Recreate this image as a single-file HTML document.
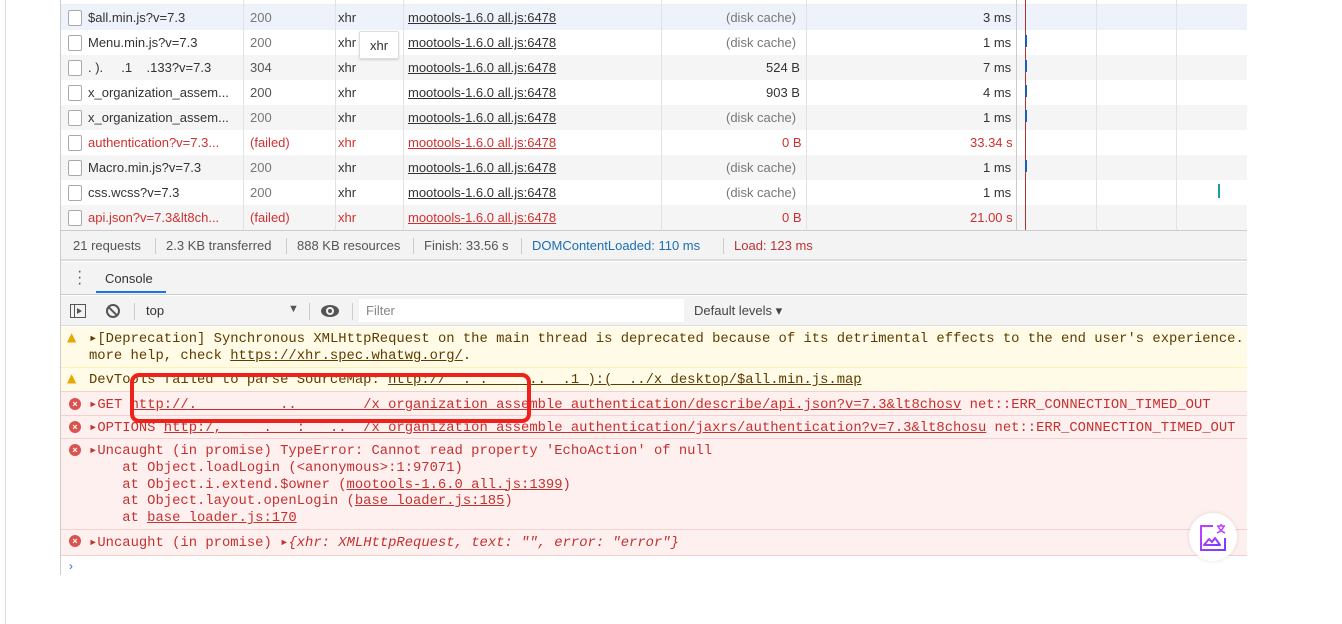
<!DOCTYPE html>
<html><head><meta charset="utf-8"><style>
*{margin:0;padding:0;box-sizing:border-box}
body{width:1342px;height:624px;background:#fff;position:relative;overflow:hidden;font-family:"Liberation Sans",sans-serif;font-size:13px;color:#333}
.abs{position:absolute}
.row{position:absolute;left:61px;width:1186px;height:25px;line-height:25px;white-space:nowrap}
.row span{position:absolute;top:0}
.cb{position:absolute;left:7px;top:5px;width:14px;height:16px;border:1px solid #aaa;border-radius:2px;background:#fff}
.red{color:#d0302f}
u{text-decoration:underline}
.vl{position:absolute;top:0;height:230px;width:1px;background:#e2e2e2}
.mono{font-family:"Liberation Mono",monospace;font-size:13.85px;white-space:pre}
.ic{position:absolute;left:8px;width:12px;height:12px;border-radius:50%;background:#d9534f;color:#fff;font-size:9px;line-height:12px;text-align:center;font-weight:bold;font-family:"Liberation Sans",sans-serif}
</style></head><body>
<div class="abs" style="left:5px;top:0;width:1px;height:624px;background:#ddd"></div>
<div class="abs" style="left:60px;top:0;width:1px;height:575px;background:#ccc"></div>
<div class="abs" style="left:61px;top:0;width:1186px;height:5px;background:#fff;border-bottom:1px solid #eee"></div>
<div class="row" style="top:5px;background:#eef3fb"><div class="cb"></div><span style="left:27px">$all.min.js?v=7.3</span><span style="left:189px;color:#777">200</span><span style="left:277px">xhr</span><span style="left:347px"><u>mootools-1.6.0 all.js:6478</u></span><span style="left:665px;color:#777">(disk cache)</span><span style="left:922px">3 ms</span></div>
<div class="row" style="top:30px;background:#fff"><div class="cb"></div><span style="left:27px">Menu.min.js?v=7.3</span><span style="left:189px;color:#777">200</span><span style="left:277px">xhr</span><span style="left:347px"><u>mootools-1.6.0 all.js:6478</u></span><span style="left:665px;color:#777">(disk cache)</span><span style="left:922px">1 ms</span></div>
<div class="row" style="top:55px;background:#f5f5f5"><div class="cb"></div><span style="left:27px">. ).&nbsp;&nbsp;&nbsp;&nbsp;&nbsp;.1&nbsp;&nbsp;&nbsp;&nbsp;.133?v=7.3</span><span style="left:189px;color:#555">304</span><span style="left:277px">xhr</span><span style="left:347px"><u>mootools-1.6.0 all.js:6478</u></span><span style="left:705px">524 B</span><span style="left:922px">7 ms</span></div>
<div class="row" style="top:80px;background:#fff"><div class="cb"></div><span style="left:27px">x_organization_assem...</span><span style="left:189px;color:#555">200</span><span style="left:277px">xhr</span><span style="left:347px"><u>mootools-1.6.0 all.js:6478</u></span><span style="left:705px">903 B</span><span style="left:922px">4 ms</span></div>
<div class="row" style="top:105px;background:#f5f5f5"><div class="cb"></div><span style="left:27px">x_organization_assem...</span><span style="left:189px;color:#777">200</span><span style="left:277px">xhr</span><span style="left:347px"><u>mootools-1.6.0 all.js:6478</u></span><span style="left:665px;color:#777">(disk cache)</span><span style="left:922px">1 ms</span></div>
<div class="row red" style="top:130px;background:#fff"><div class="cb"></div><span style="left:27px">authentication?v=7.3...</span><span style="left:189px">(failed)</span><span style="left:277px">xhr</span><span style="left:347px"><u>mootools-1.6.0 all.js:6478</u></span><span style="left:721px">0 B</span><span style="left:909px">33.34 s</span></div>
<div class="row" style="top:155px;background:#f5f5f5"><div class="cb"></div><span style="left:27px">Macro.min.js?v=7.3</span><span style="left:189px;color:#777">200</span><span style="left:277px">xhr</span><span style="left:347px"><u>mootools-1.6.0 all.js:6478</u></span><span style="left:665px;color:#777">(disk cache)</span><span style="left:922px">1 ms</span></div>
<div class="row" style="top:180px;background:#fff"><div class="cb"></div><span style="left:27px">css.wcss?v=7.3</span><span style="left:189px;color:#777">200</span><span style="left:277px">xhr</span><span style="left:347px"><u>mootools-1.6.0 all.js:6478</u></span><span style="left:665px;color:#777">(disk cache)</span><span style="left:922px">1 ms</span></div>
<div class="row red" style="top:205px;background:#f5f5f5"><div class="cb"></div><span style="left:27px">api.json?v=7.3&amp;lt8ch...</span><span style="left:189px">(failed)</span><span style="left:277px">xhr</span><span style="left:347px"><u>mootools-1.6.0 all.js:6478</u></span><span style="left:721px">0 B</span><span style="left:909px">21.00 s</span></div>
<div class="vl" style="left:243px"></div><div class="vl" style="left:335px"></div><div class="vl" style="left:403px"></div><div class="vl" style="left:661px"></div><div class="vl" style="left:806px"></div><div class="vl" style="left:1016px;background:#ccc"></div><div class="vl" style="left:1096px"></div><div class="vl" style="left:1176px"></div>
<div class="abs" style="left:1025px;top:0;width:1px;height:230px;background:#a33"></div>
<div class="abs" style="left:1025px;top:35px;width:2px;height:12px;background:#1a5fb4"></div>
<div class="abs" style="left:1025px;top:60px;width:2px;height:12px;background:#1a5fb4"></div>
<div class="abs" style="left:1025px;top:85px;width:2px;height:12px;background:#1a5fb4"></div>
<div class="abs" style="left:1025px;top:110px;width:2px;height:12px;background:#1a5fb4"></div>
<div class="abs" style="left:1025px;top:160px;width:2px;height:12px;background:#1a5fb4"></div>
<div class="abs" style="left:1218px;top:184px;width:2px;height:14px;background:#1b9aaa"></div>
<div class="abs" style="left:359px;top:31px;width:40px;height:28px;background:#fff;border:1px solid #ddd;border-radius:2px;box-shadow:0 1px 2px rgba(0,0,0,.15);line-height:28px;text-align:center;color:#333">xhr</div>
<div class="abs" style="left:61px;top:230px;width:1186px;height:31px;background:#f3f3f3;border-top:1px solid #ccc;border-bottom:2px solid #ddd;line-height:29px;color:#555;white-space:nowrap">
<span class="abs" style="left:12px">21 requests</span><span class="abs" style="left:94px;top:7px;width:1px;height:16px;background:#ccc"></span>
<span class="abs" style="left:105px">2.3 KB transferred</span><span class="abs" style="left:225px;top:7px;width:1px;height:16px;background:#ccc"></span>
<span class="abs" style="left:236px">888 KB resources</span><span class="abs" style="left:352px;top:7px;width:1px;height:16px;background:#ccc"></span>
<span class="abs" style="left:363px">Finish: 33.56 s</span><span class="abs" style="left:460px;top:7px;width:1px;height:16px;background:#ccc"></span>
<span class="abs" style="left:471px;color:#1a6fb4">DOMContentLoaded: 110 ms</span><span class="abs" style="left:662px;top:7px;width:1px;height:16px;background:#ccc"></span>
<span class="abs" style="left:673px;color:#b33">Load: 123 ms</span></div>
<div class="abs" style="left:61px;top:262px;width:1186px;height:33px;background:#f3f3f3;border-bottom:1px solid #ccc">
<span class="abs" style="left:16px;top:7px;font-size:16px;color:#555;line-height:6px">·<br>·<br>·</span>
<span class="abs" style="left:44px;top:9px;color:#333">Console</span>
<div class="abs" style="left:35px;top:29px;width:70px;height:2px;background:#1a73e8"></div></div>
<div class="abs" style="left:61px;top:296px;width:1186px;height:30px;background:#f3f3f3;border-bottom:1px solid #ddd">
<div class="abs" style="left:9px;top:8px;width:16px;height:14px;border:1px solid #555"><div class="abs" style="left:3px;top:0;width:1px;height:12px;background:#555"></div><div class="abs" style="left:6px;top:3px;border-left:5px solid #555;border-top:3px solid transparent;border-bottom:3px solid transparent"></div></div>
<div class="abs" style="left:45px;top:8px;width:14px;height:14px;border:2px solid #555;border-radius:50%"><div class="abs" style="left:4px;top:-1px;width:2px;height:13px;background:#555;transform:rotate(-45deg)"></div></div>
<div class="abs" style="left:73px;top:7px;width:1px;height:17px;background:#ccc"></div>
<span class="abs" style="left:85px;top:7px">top</span><span class="abs" style="left:227px;top:7px;font-size:11px;color:#555">▼</span>
<div class="abs" style="left:248px;top:7px;width:1px;height:17px;background:#ccc"></div>
<div class="abs" style="left:260px;top:9px;width:18px;height:12px;border-radius:50%;background:#555"><div class="abs" style="left:5px;top:2px;width:8px;height:8px;border-radius:50%;background:#f3f3f3"></div><div class="abs" style="left:7px;top:4px;width:4px;height:4px;border-radius:50%;background:#555"></div></div>
<div class="abs" style="left:291px;top:7px;width:1px;height:17px;background:#ccc"></div>
<div class="abs" style="left:298px;top:3px;width:325px;height:23px;background:#fff;color:#888;line-height:23px;padding-left:7px">Filter</div>
<span class="abs" style="left:633px;top:7px;color:#444">Default levels ▾</span></div>
<div class="abs mono" style="left:61px;top:327px;width:1186px;height:41px;background:#fffbe6;border-bottom:1px solid #fff0b3;color:#5c3c00">
<span class="abs" style="left:6px;top:3px;color:#e6a800;font-family:'DejaVu Sans';font-size:12px">▲</span>
<span class="abs" style="left:28px;top:4px;line-height:17px">▸[Deprecation] Synchronous XMLHttpRequest on the main thread is deprecated because of its detrimental effects to the end user's experience.
more help, check <u>https://xhr.spec.whatwg.org/</u>.</span></div>
<div class="abs mono" style="left:61px;top:368px;width:1186px;height:24px;background:#fffbe6;border-bottom:1px solid #f3d0d0;color:#5c3c00">
<span class="abs" style="left:6px;top:3px;color:#e6a800;font-family:'DejaVu Sans';font-size:12px">▲</span>
<span class="abs" style="left:28px;top:4px">DevTools failed to parse SourceMap: <u>http://&nbsp;&nbsp;.&nbsp;.&nbsp;&nbsp;&nbsp;&nbsp;&nbsp;..&nbsp;&nbsp;.1 ):(&nbsp;&nbsp;../x desktop/$all.min.js.map</u></span></div>
<div class="abs mono" style="left:61px;top:392px;width:1186px;height:163px;background:#fff0f0;color:#c4312f">
<div class="ic" style="top:6px">×</div><span class="abs" style="left:28px;top:4px">▸GET <u>http://.&nbsp;&nbsp;&nbsp;&nbsp;&nbsp;&nbsp;&nbsp;&nbsp;&nbsp;&nbsp;..&nbsp;&nbsp;&nbsp;&nbsp;&nbsp;&nbsp;&nbsp;&nbsp;/x organization assemble authentication/describe/api.json?v=7.3&amp;lt8chosv</u> net::ERR_CONNECTION_TIMED_OUT</span>
<div class="abs" style="left:0;top:23px;width:1186px;height:1px;background:#f3d0d0"></div>
<div class="ic" style="top:29px">×</div><span class="abs" style="left:28px;top:27px">▸OPTIONS <u>http:/,&nbsp;&nbsp;_&nbsp;&nbsp;.&nbsp;&nbsp;&nbsp;:&nbsp;&nbsp;&nbsp;..&nbsp;&nbsp;/x organization assemble authentication/jaxrs/authentication?v=7.3&amp;lt8chosu</u> net::ERR_CONNECTION_TIMED_OUT</span>
<div class="abs" style="left:0;top:46px;width:1186px;height:1px;background:#f3d0d0"></div>
<div class="ic" style="top:52px">×</div><span class="abs" style="left:28px;top:51px;line-height:16.8px">▸Uncaught (in promise) TypeError: Cannot read property 'EchoAction' of null
    at Object.loadLogin (&lt;anonymous&gt;:1:97071)
    at Object.i.extend.$owner (<u>mootools-1.6.0 all.js:1399</u>)
    at Object.layout.openLogin (<u>base loader.js:185</u>)
    at <u>base loader.js:170</u></span>
<div class="abs" style="left:0;top:137px;width:1186px;height:1px;background:#f3d0d0"></div>
<div class="ic" style="top:143px">×</div><span class="abs" style="left:28px;top:142px">▸Uncaught (in promise) ▸<i>{xhr: XMLHttpRequest, text: "", error: "error"}</i></span>
</div>
<div class="abs" style="left:61px;top:555px;width:1186px;height:20px;background:#fff;border-top:1px solid #f3d0d0;color:#1a73e8;font-size:12px;padding-left:8px;line-height:20px">›</div>
<div class="abs" style="left:130px;top:373px;width:401px;height:50px;border:4px solid #f0201a;border-radius:9px"></div>
<div class="abs" style="left:1189px;top:513px;width:48px;height:48px;border-radius:50%;background:#fff;box-shadow:0 0 4px rgba(0,0,0,.12)">
<svg width="48" height="48" viewBox="0 0 48 48"><defs><linearGradient id="g" x1="0" y1="0" x2="1" y2="1"><stop offset="0" stop-color="#c040ff"/><stop offset="1" stop-color="#7a3cff"/></linearGradient></defs>
<path d="M24 13H12v24h24V25" fill="none" stroke="url(#g)" stroke-width="2"/>
<path d="M15 32l5-6 3 3 3-4 5 7z" fill="none" stroke="url(#g)" stroke-width="2" stroke-linejoin="round"/>
<path d="M28 13h8M32 11v2M29 13q2 5 7 7M35 13q-2 5-7 7" fill="none" stroke="#c040ff" stroke-width="1.6"/></svg></div>
</body></html>
